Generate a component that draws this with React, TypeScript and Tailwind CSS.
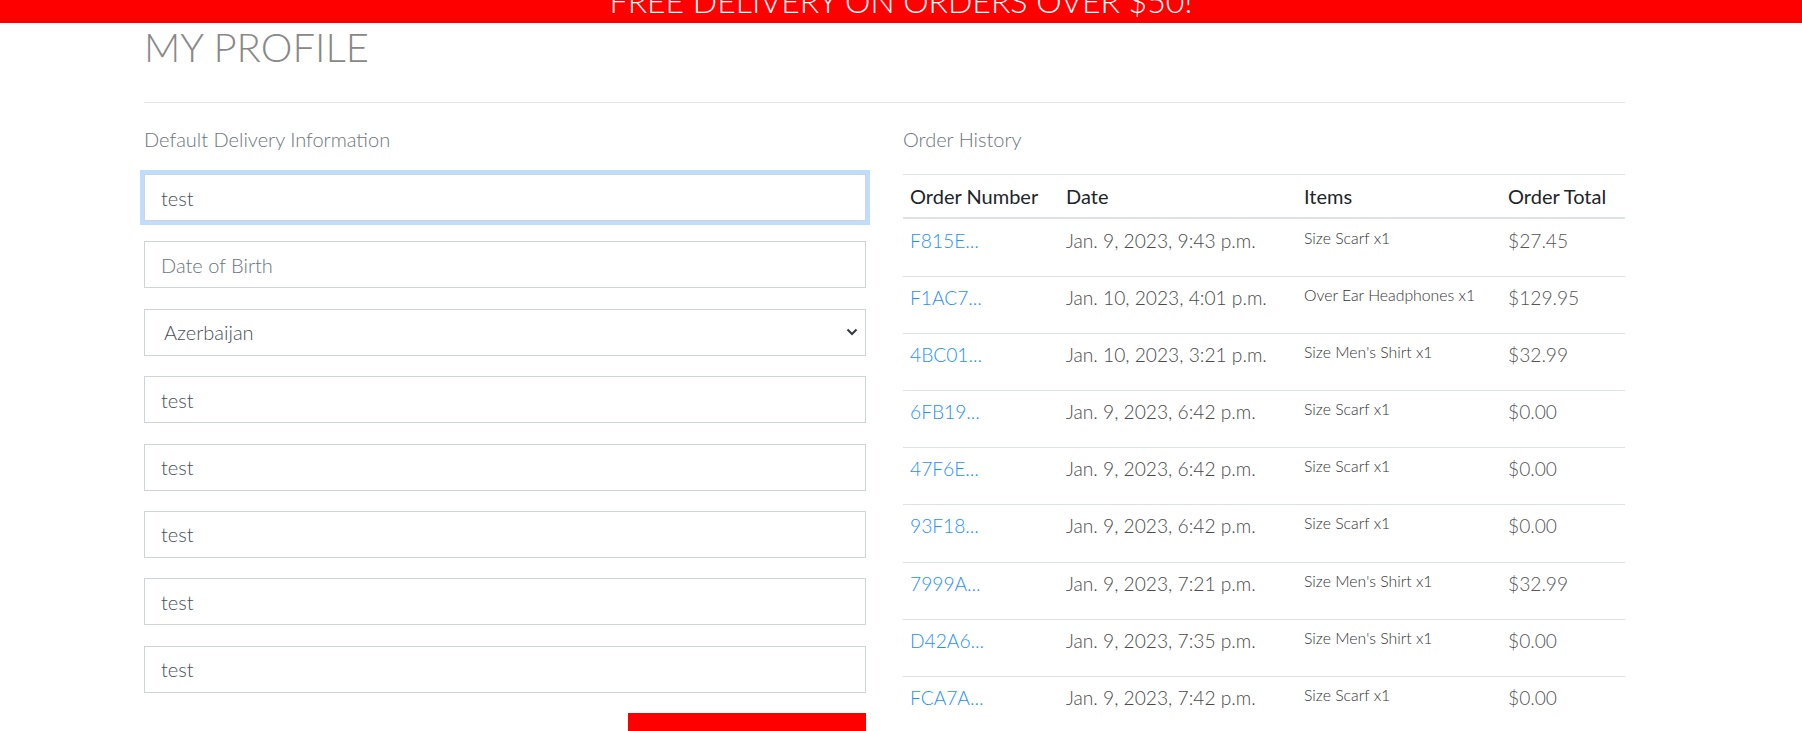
import React from 'react';

type Order = { id: string; date: string; items: string; total: string };

const orders: Order[] = [
  { id: 'F815E...', date: 'Jan. 9, 2023, 9:43 p.m.', items: 'Size Scarf x1', total: '$27.45' },
  { id: 'F1AC7...', date: 'Jan. 10, 2023, 4:01 p.m.', items: 'Over Ear Headphones x1', total: '$129.95' },
  { id: '4BC01...', date: 'Jan. 10, 2023, 3:21 p.m.', items: "Size Men's Shirt x1", total: '$32.99' },
  { id: '6FB19...', date: 'Jan. 9, 2023, 6:42 p.m.', items: 'Size Scarf x1', total: '$0.00' },
  { id: '47F6E...', date: 'Jan. 9, 2023, 6:42 p.m.', items: 'Size Scarf x1', total: '$0.00' },
  { id: '93F18...', date: 'Jan. 9, 2023, 6:42 p.m.', items: 'Size Scarf x1', total: '$0.00' },
  { id: '7999A...', date: 'Jan. 9, 2023, 7:21 p.m.', items: "Size Men's Shirt x1", total: '$32.99' },
  { id: 'D42A6...', date: 'Jan. 9, 2023, 7:35 p.m.', items: "Size Men's Shirt x1", total: '$0.00' },
  { id: 'FCA7A...', date: 'Jan. 9, 2023, 7:42 p.m.', items: 'Size Scarf x1', total: '$0.00' },
];

const inputBase =
  'block w-full h-[47px] px-4 border border-[#ced4da] rounded-none bg-white text-[20px] font-light text-[#495057] placeholder:text-[#6c757d] outline-none';

const cols = 'grid grid-cols-[156px_238px_204px_124px]';

const App: React.FC = () => {
  return (
    <div className="h-screen overflow-hidden bg-white font-['Lato','Liberation_Sans',sans-serif]">
      {/* BANNER */}
      <div className="h-[23px] overflow-hidden bg-[#ff0000] text-center text-white">
        <p className="-mt-[15px] text-[32px] leading-[32px] font-light uppercase">Free delivery on orders over $50!</p>
      </div>

      <div className="pl-[144px] w-[1625px]">
        <h2 className="text-[40px] leading-[48px] font-light text-[#888888] uppercase">My Profile</h2>
        <hr className="mt-[31px] border-0 border-t border-[#e3e3e3]" />

        <div className="grid grid-cols-[722px_722px] gap-x-[37px]">
          {/* DELIVERY FORM */}
          <div>
            <p className="mt-[24px] text-[20px] leading-[24px] font-light text-[#6c757d]">Default Delivery Information</p>
            <form className="mt-[23px] flex flex-col gap-[20.4px]">
              <input
                className={`${inputBase} border-[#80bdff] shadow-[0_0_0_4px_rgba(0,123,255,0.25)]`}
                defaultValue="test"
              />
              <input className={inputBase} placeholder="Date of Birth" />
              <div className="relative">
                <select className={`${inputBase} appearance-none pl-[19px]`} defaultValue="AZ">
                  <option value="AZ">Azerbaijan</option>
                </select>
                <svg className="pointer-events-none absolute right-[8px] top-1/2 -translate-y-1/2" width="12" height="8" viewBox="0 0 12 8">
                  <path d="M1.5 1.5 L6 6 L10.5 1.5" fill="none" stroke="#343a40" strokeWidth="2" />
                </svg>
              </div>
              <input className={inputBase} defaultValue="test" />
              <input className={inputBase} defaultValue="test" />
              <input className={inputBase} defaultValue="test" />
              <input className={inputBase} defaultValue="test" />
              <input className={inputBase} defaultValue="test" />
              <div className="flex justify-end">
                <button type="button" className="w-[238px] h-[48px] pt-[16px] bg-[#ff0000] text-white text-[20px] leading-[24px] font-light uppercase">
                  Update Information
                </button>
              </div>
            </form>
          </div>

          {/* ORDER HISTORY */}
          <div>
            <p className="mt-[24px] text-[20px] leading-[24px] font-light text-[#6c757d]">Order History</p>
            <div className="mt-[23px]">
              <div className={`${cols} h-[45.3px] border-t border-b-2 border-[#dee2e6] text-[20px] leading-[24px] text-[#212529]`}>
                <div className="pl-[7px] pt-[9px]">Order Number</div>
                <div className="pl-[7px] pt-[9px]">Date</div>
                <div className="pl-[7px] pt-[9px]">Items</div>
                <div className="pl-[7px] pt-[9px]">Order Total</div>
              </div>
              {orders.map((o, i) => (
                <div
                  key={o.id}
                  className={`${cols} ${i === 0 ? 'h-[56.8px]' : 'h-[57.1px] border-t border-[#dee2e6]'} font-light`}
                >
                  <div className={`pl-[7px] ${i === 0 ? 'pt-[10px]' : 'pt-[9px]'} text-[19.2px] leading-[24px]`}>
                    <a href="#" className="text-[#1e90ff]">{o.id}</a>
                  </div>
                  <div className={`pl-[7px] ${i === 0 ? 'pt-[10px]' : 'pt-[9px]'} text-[19.2px] leading-[24px] text-[#4a4a4a]`}>{o.date}</div>
                  <div className={`pl-[7px] ${i === 0 ? 'pt-[9px]' : 'pt-[8px]'} text-[15.8px] leading-[19px] text-[#333333]`}>{o.items}</div>
                  <div className={`pl-[7px] ${i === 0 ? 'pt-[10px]' : 'pt-[9px]'} text-[19.2px] leading-[24px] text-[#555555]`}>{o.total}</div>
                </div>
              ))}
            </div>
          </div>
        </div>
      </div>
    </div>
  );
};

export default App;
